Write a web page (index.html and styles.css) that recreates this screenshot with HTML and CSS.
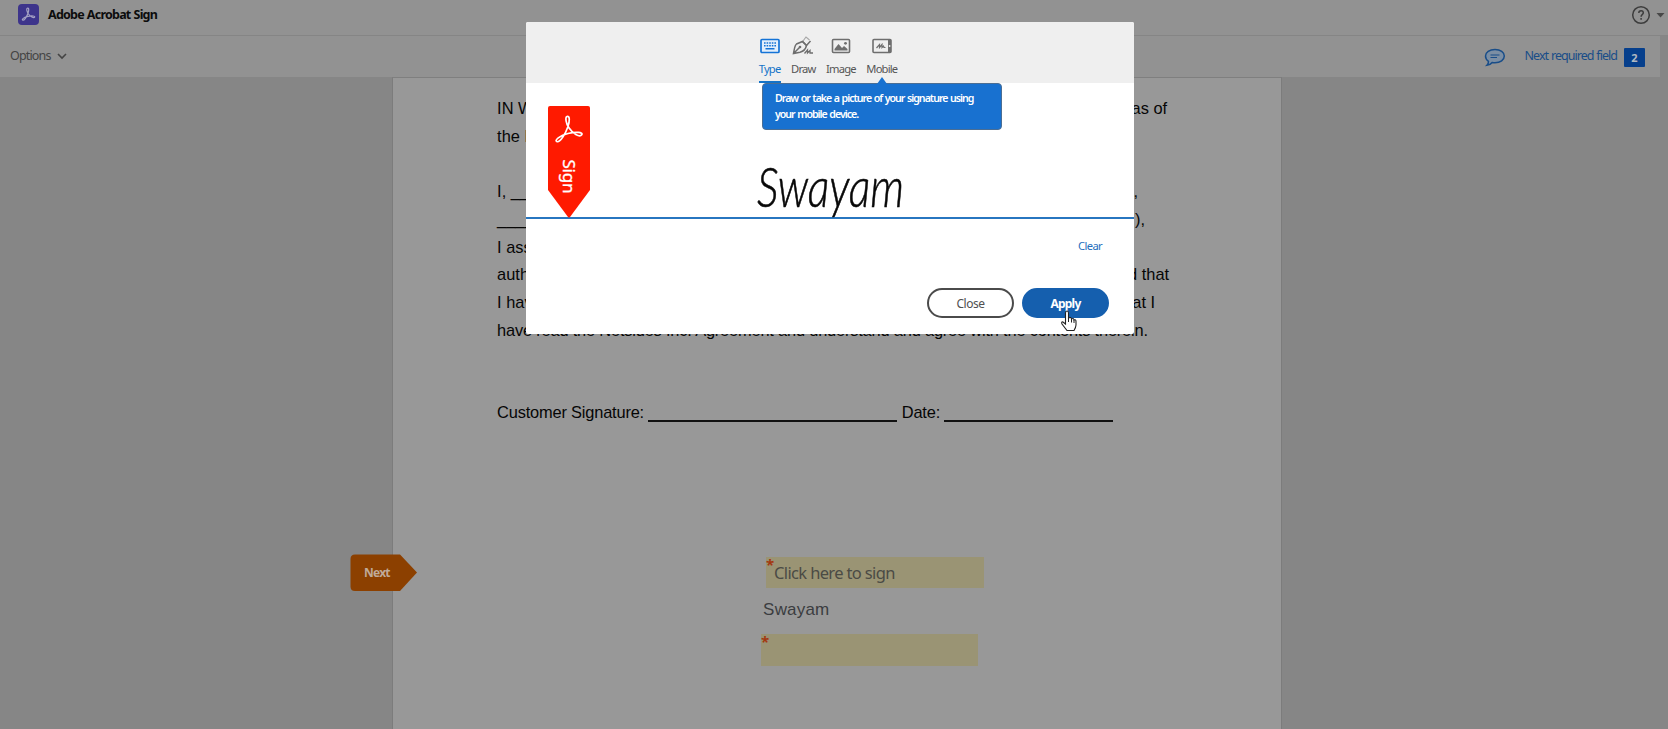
FILE: index.html
```html
<!DOCTYPE html>
<html lang="en">
<head>
<meta charset="utf-8">
<title>Adobe Acrobat Sign</title>
<link rel="stylesheet" href="styles.css">
</head>
<body>
<div class="app">
  <header class="brandbar">
    <svg class="logo" width="21" height="21" viewBox="0 0 21 21"><rect width="21" height="21" rx="4" fill="#3d348b"/><path d="M9.200 4.200c1.800-.6 2 2 .7 5.200-1.300 3.100-3.700 7-5 6.700-1.700-.4 1-2.900 5-3.700 3.800-.8 7.500-.6 6.700.8-.9 1.500-4.300-.7-6.100-3.200C8.800 7.500 8.200 4.700 9.200 4.200z" fill="none" stroke="#a5a1c4" stroke-width="1.200"/></svg>
    <span class="brand">Adobe Acrobat Sign</span>
    <svg class="help" width="34" height="20" viewBox="0 0 34 20"><circle cx="10" cy="10" r="8.300" fill="none" stroke="#3d3d3d" stroke-width="1.500"/><path d="M7.800 8c0-3 4.500-3 4.500-.3 0 1.700-2.200 1.900-2.200 4M10.100 13v1.700" fill="none" stroke="#3d3d3d" stroke-width="1.500"/><path d="M25.500 8h8l-4 4.500z" fill="#484848"/></svg>
  </header>
  <div class="toolbar">
    <span class="options">Options</span>
    <svg class="chev" width="10" height="7" viewBox="0 0 10 7"><path d="M1 1l4 4 4-4" fill="none" stroke="#444" stroke-width="1.600"/></svg>
    <div class="tools">
      <svg class="bubble" width="22" height="19" viewBox="0 0 22 19"><path d="M11 1.500c5.500 0 9.300 2.700 9.300 6.600s-4 6.700-9.300 6.700c-1 0-2-.1-2.800-.3-1.200 1.500-3 2.700-5.300 2.800 1.300-1.200 1.700-2.600 1.600-4C2.700 12.100 1.500 10.300 1.500 8.100 1.500 4.200 5.500 1.500 11 1.500z" fill="#7b8ea3" stroke="#194d88" stroke-width="1.500"/><path d="M6.500 7h9M6.500 9.500h6.500" stroke="#194d88" stroke-width="1.200"/></svg>
      <span class="nextfield">Next required field</span>
      <span class="count">2</span>
    </div>
  </div>
  <main class="viewer">
    <article class="page">
      <p class="ln"><span>IN W</span><span class="e1">as of</span></p>
      <p class="ln"><span>the E</span></p>
      <p class="ln"></p>
      <p class="ln"><span>I, ____</span><span class="e2">,</span></p>
      <p class="ln"><span>_______</span><span class="e3">),</span></p>
      <p class="ln"><span>I ass</span></p>
      <p class="ln"><span>auth</span><span class="e4">d that</span></p>
      <p class="ln"><span>I hav</span><span class="e5">at I</span></p>
      <p class="ln last"><span>have read the Netsides Inc. Agreement and understand and agree with the contents therein.</span></p>
      <p class="ln sign"><span>Customer Signature: </span><i class="rule long"></i><span> Date: </span><i class="rule short"></i></p>
      <div class="fields">
        <div class="field first"><b class="star">*</b>Click here to sign</div>
        <div class="signer">Swayam</div>
        <div class="field second"><b class="star">*</b></div>
      </div>
    </article>
  </main>
</div>
<div class="next"><svg width="68" height="38" viewBox="0 0 68 38"><path d="M5 .5H50L67 18.500 50 37H5Q.5 37 .5 32.500V5Q.5.5 5 .5z" fill="#8c4000"/></svg><span>Next</span></div>
<section class="modal">
  <nav class="tabs">
    <div class="tab active"><svg width="22" height="20" viewBox="0 0 22 20"><rect x="2" y="3.500" width="18" height="13" rx="1" fill="#e2eefb" stroke="#1473d6" stroke-width="1.700"/><path d="M5 7h12.500M5 9.800h12.500" stroke="#1473d6" stroke-width="1.600" stroke-dasharray="1.600 1"/><path d="M6.500 12.800h9" stroke="#1473d6" stroke-width="1.500"/></svg><span>Type</span></div>
    <div class="tab"><svg width="22" height="20" viewBox="0 0 22 20"><path d="M1.500 17.500C2.500 13 2.500 9.500 4.500 8L10.500 5.500 14.500 9.500C13.500 14 11 15.500 8 16.200zM1.500 17.500L7.500 11.500" fill="none" stroke="#6e6e6e" stroke-width="1.500"/><path d="M11 5L14 1l3.500 3" fill="none" stroke="#a8a8a8" stroke-width="1.200"/><path d="M10.500 5.500l4 4L18.500 5" fill="none" stroke="#6e6e6e" stroke-width="1.500"/><circle cx="8" cy="11" r="1.300" fill="#6e6e6e"/><path d="M12.500 17.500l3-3.500 0 3 2.500-2.500v2.500h3" fill="none" stroke="#6e6e6e" stroke-width="1.300"/></svg><span>Draw</span></div>
    <div class="tab"><svg width="22" height="20" viewBox="0 0 22 20"><rect x="2.500" y="3.500" width="17" height="13" rx="1" fill="none" stroke="#6e6e6e" stroke-width="1.600"/><path d="M4.500 14.500V13l4-5 3.500 4 2-2 3.500 3v1.500z" fill="#6e6e6e"/><circle cx="15.500" cy="7.300" r="1.400" fill="#6e6e6e"/></svg><span>Image</span></div>
    <div class="tab"><svg width="22" height="20" viewBox="0 0 22 20"><rect x="2" y="3.500" width="18" height="13" rx="1" fill="none" stroke="#6e6e6e" stroke-width="1.600"/><path d="M17 3.500h3v13h-3z" fill="#6e6e6e"/><circle cx="18.600" cy="10" r=".9" fill="#eee"/><path d="M5.500 12l3-3.500v3l2.500-3v3l1.500-1.500.5 1.500h1.500" fill="none" stroke="#6e6e6e" stroke-width="1.200"/></svg><span>Mobile</span></div>
  </nav>
  <div class="pad">
    <svg class="ribbon" width="42" height="112" viewBox="0 0 42 112"><path d="M2 0H40Q42 0 42 2V84L22 111Q21 112 20 111L0 84V2Q0 0 2 0z" fill="#ff1a00"/><path d="M19 10.500c2.800-.8 3 4 .8 10.500-2.200 6.500-7.500 15.500-10.700 14.700-3.500-1 3-6.300 10.900-8.200 7.500-1.800 15.700-1.400 13.700 1.300-2.200 3-9.200-1.600-12.800-7C18 17.500 16.900 11.200 19 10.500z" fill="none" stroke="#fff" stroke-width="1.700"/><text class="ribbontext" transform="translate(15 53.500) rotate(90)" textLength="34">Sign</text></svg>
    <svg class="signature" width="150" height="66" viewBox="0 0 150 66"><text class="script" x="0" y="46.500" textLength="147" lengthAdjust="spacingAndGlyphs">Swayam</text></svg>
  </div>
  <div class="clear">Clear</div>
  <div class="buttons"><button class="btn">Close</button><button class="btn apply">Apply</button></div>
</section>
<div class="tip">Draw or take a picture of your signature using<br>your mobile device.</div>
<svg class="cursor" width="18" height="22" viewBox="0 0 18 22"><path d="M5.500 14V3Q5.500 1 7 1T8.500 3V8Q11 6.500 11.500 9 13.500 7.500 14 10 16 9 16 11.500V15Q16 17 14 20.500H7L2 14Q1 11.500 3 12z" fill="#fff" stroke="#222" stroke-width="1.100"/><path d="M8.500 8v4M11.500 9v3.500M14 10v3" stroke="#222"/></svg>
</body>
</html>
```
FILE: styles.css
```css
* { box-sizing: border-box; }
body { margin: 0; width: 1668px; height: 729px; overflow: hidden; position: relative; background: #868686; font-family: "Noto Sans", sans-serif; }
.app { display: flex; flex-direction: column; height: 729px; }
.brandbar { height: 36px; background: #929292; border-bottom: 1px solid #858585; display: flex; align-items: center; padding: 0 3px 6px 18px; }
.brand { margin: 0 0 0 9px; font-size: 12.5px; font-weight: 700; letter-spacing: -.77px; word-spacing: .5px; color: #0c0c0c; }
.help { margin-left: auto; }
.toolbar { height: 41px; width: 1660px; background: #929292; display: flex; align-items: center; padding: 0 15px 0 10px; }
.options { font-size: 12.5px; letter-spacing: -.85px; color: #444; margin-bottom: 2px; }
.chev { margin: 0 0 1px 6px; }
.tools { margin-left: auto; display: flex; align-items: center; }
.bubble { margin-top: 1px; }
.nextfield { margin: 0 7px 2px 19px; font-size: 12.5px; letter-spacing: -.96px; word-spacing: .5px; color: #194d88; white-space: nowrap; }
.count { width: 21px; height: 19px; margin-top: 1px; background: #063f8c; color: #b0b8c2; font-size: 11px; font-weight: 700; line-height: 19px; text-align: center; border-radius: 1px; }
.viewer { flex: 1; display: flex; justify-content: center; }
.page { width: 890px; margin-left: 5px; background: #989898; border-left: 1px solid #7c7c7c; border-right: 1px solid #7c7c7c; border-top: 1px solid #7f7f7f; padding: 16.4px 0 0 104.6px; font-family: "Liberation Sans", Arial, sans-serif; }
.ln { margin: 0; height: 27.65px; line-height: 28px; font-size: 16.4px; color: #060606; display: flex; justify-content: space-between; width: 673px; white-space: pre; }
.e1 { margin-right: 3px; }
.e2 { margin-right: 32px; }
.e3 { margin-right: 25px; }
.e4 { margin-right: 1px; }
.e5 { margin-right: 15px; }
.last { letter-spacing: -.183px; }
.sign { margin-top: 55.3px; justify-content: flex-start; letter-spacing: -.18px; }
.rule { border-bottom: 2px solid #111; height: 24px; }
.long { width: 249px; }
.short { width: 169px; }
.fields { width: 240px; margin: 131px 0 0 264px; }
.field { position: relative; background: #9a9474; }
.first { width: 218px; height: 31px; margin-left: 5px; padding-left: 8px; font: 16.5px/31px "Noto Sans", sans-serif; letter-spacing: -.65px; color: #4b4b45; }
.star { position: absolute; left: 0; top: -2px; font: 700 15px/18px "Noto Sans", sans-serif; color: #a33810; }
.signer { font-size: 17px; line-height: 20px; margin: 12px 0 14px 2px; color: #3b3d40; letter-spacing: .2px; }
.second { width: 217px; height: 32px; }
.next { position: absolute; left: 350px; top: 554px; height: 38px; }
.next span { position: absolute; left: 14px; top: 10px; font-size: 12px; line-height: 18px; font-weight: 700; letter-spacing: -.75px; color: #c0aa98; }
.modal { position: absolute; left: 526px; top: 22px; width: 608px; height: 312px; background: #fff; border-radius: 2px; overflow: hidden; }
.tabs { height: 61px; background: #efefef; display: flex; justify-content: center; gap: 10.5px; padding: 14px 4px 0 0; }
.tab { display: flex; flex-direction: column; align-items: center; height: 47px; font-size: 11.2px; letter-spacing: -.8px; line-height: 15px; color: #555; gap: 5px; }
.active { color: #1473c8; border-bottom: 2px solid #1473c8; }
.pad { height: 136px; border-bottom: 2px solid #2776c0; display: flex; padding: 23px 0 0 21.5px; }
.ribbon { flex: none; }
.ribbontext { font: 17px "Noto Sans", sans-serif; fill: #fff; stroke: #fff; stroke-width: .3px; }
.signature { margin: 54px 0 0 167px; overflow: visible; flex: none; }
.script { font: italic 300 55px Lato, sans-serif; fill: #080808; stroke: #080808; stroke-width: .6px; }
.clear { margin: 18px 32px 0 0; text-align: right; font-size: 11.2px; line-height: 17px; letter-spacing: -.65px; color: #1f6fbd; }
.buttons { display: flex; justify-content: flex-end; gap: 8px; padding: 34px 25px 0 0; }
.btn { width: 87px; height: 30px; border: 2px solid #4b4b4b; border-radius: 15px; background: #fff; color: #505050; font: 12px "Noto Sans", sans-serif; letter-spacing: -.5px; padding: 0; }
.apply { background: #155fae; border-color: #155fae; color: #fff; font-weight: 700; letter-spacing: -.8px; }
.tip { position: absolute; left: 762px; top: 83px; width: 240px; height: 47px; background: #1871d0; border: 1px solid #4b6e94; border-radius: 4px; color: #fff; font-size: 10.6px; line-height: 16px; font-weight: 600; letter-spacing: -1px; word-spacing: .8px; padding: 6px 0 0 12px; white-space: nowrap; }
.tip::before { content: ""; position: absolute; left: 114px; top: -7px; border: 5px solid transparent; border-top: 0; border-bottom: 7px solid #1871d0; }
.cursor { position: absolute; left: 1060px; top: 310px; }
```
